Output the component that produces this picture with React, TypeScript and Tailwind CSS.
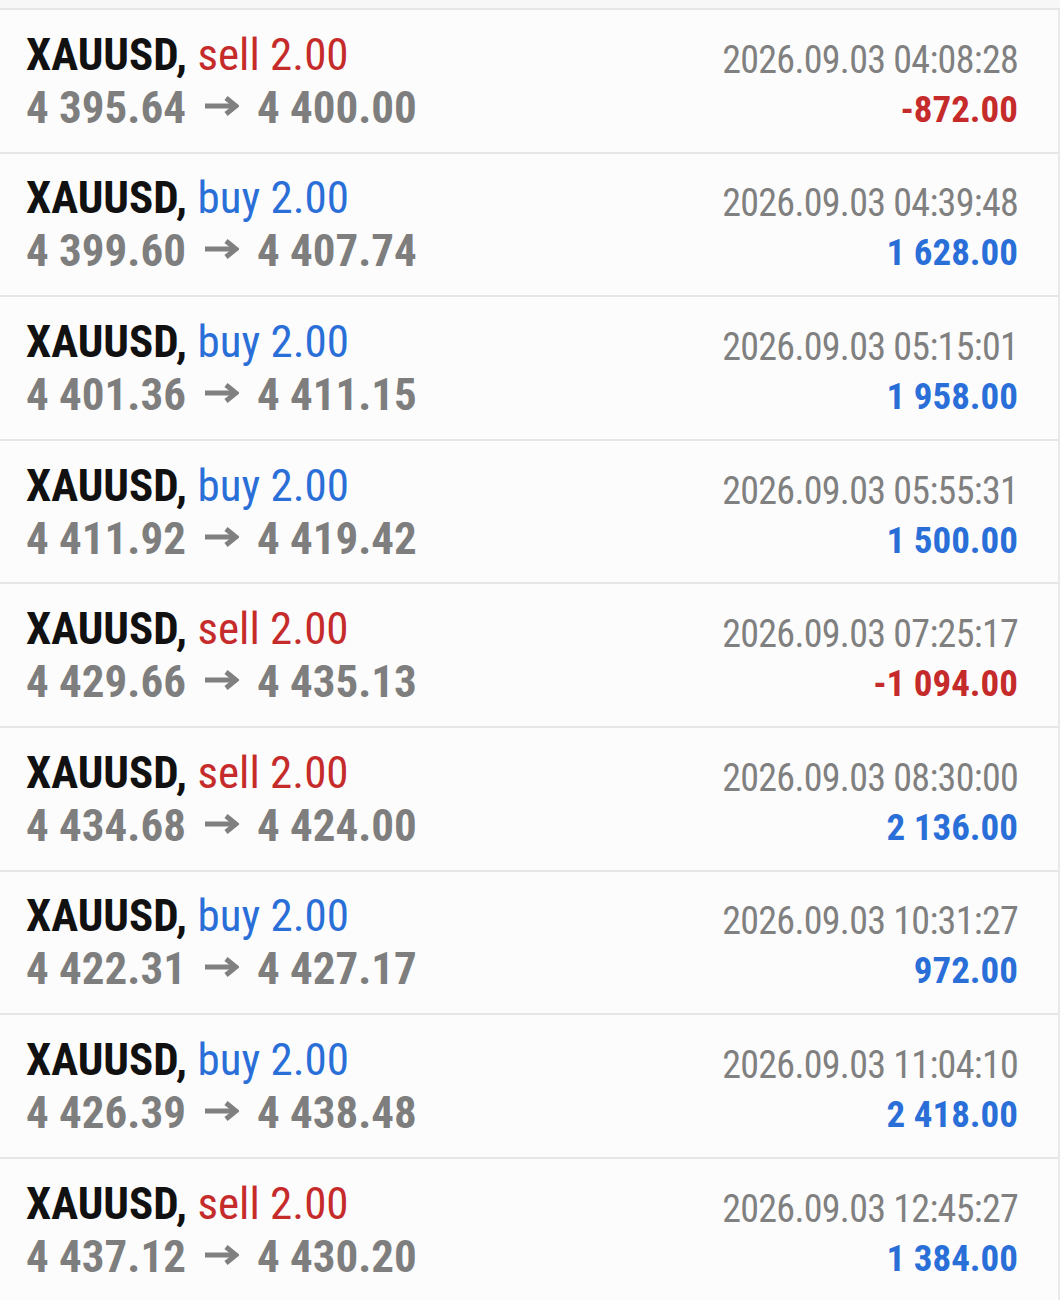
import React from "react";

type Deal = {
  side: "buy" | "sell";
  open: string;
  close: string;
  time: string;
  profit: string;
};

const deals: Deal[] = [
  { side: "sell", open: "4 395.64", close: "4 400.00", time: "2026.09.03 04:08:28", profit: "-872.00" },
  { side: "buy", open: "4 399.60", close: "4 407.74", time: "2026.09.03 04:39:48", profit: "1 628.00" },
  { side: "buy", open: "4 401.36", close: "4 411.15", time: "2026.09.03 05:15:01", profit: "1 958.00" },
  { side: "buy", open: "4 411.92", close: "4 419.42", time: "2026.09.03 05:55:31", profit: "1 500.00" },
  { side: "sell", open: "4 429.66", close: "4 435.13", time: "2026.09.03 07:25:17", profit: "-1 094.00" },
  { side: "sell", open: "4 434.68", close: "4 424.00", time: "2026.09.03 08:30:00", profit: "2 136.00" },
  { side: "buy", open: "4 422.31", close: "4 427.17", time: "2026.09.03 10:31:27", profit: "972.00" },
  { side: "buy", open: "4 426.39", close: "4 438.48", time: "2026.09.03 11:04:10", profit: "2 418.00" },
  { side: "sell", open: "4 437.12", close: "4 430.20", time: "2026.09.03 12:45:27", profit: "1 384.00" },
];

// price arrow, drawn because the font's → is too thin and small
const Arrow = () => (
  <svg
    className="mx-[18px] inline-block h-[20px] w-[35px] align-[7px]"
    viewBox="0 0 35 20"
    fill="none"
    stroke="#808080"
    strokeWidth={5}
  >
    <path d="M1 10H31" />
    <path d="M22 2L32 10L22 18" strokeLinejoin="miter" />
  </svg>
);

const DealRow = ({ deal }: { deal: Deal }) => {
  const loss = deal.profit.startsWith("-");
  return (
    <div className="flex h-[143.6px] items-center justify-between border-b-2 border-[#e6e6e6] pl-[26px] pr-[40px]">
      <div className="flex flex-col text-[45px] leading-[53px]">
        <div>
          <span className="font-bold text-[#111111]">XAUUSD,</span>{" "}
          <span className={deal.side === "sell" ? "text-[#c62b2b]" : "text-[#2a6fd8]"}>
            {deal.side} 2.00
          </span>
        </div>
        <div className="whitespace-nowrap font-bold text-[#7e7e7e]">
          {deal.open}
          <Arrow />
          {deal.close}
        </div>
      </div>
      <div className="flex flex-col items-end pt-[8px] leading-[50px]">
        <div className="text-[38px] tracking-[-0.7px] text-[#808080]">{deal.time}</div>
        <div className={`text-[37px] font-bold ${loss ? "text-[#c62b2b]" : "text-[#2a6fd8]"}`}>
          {deal.profit}
        </div>
      </div>
    </div>
  );
};

export default function App() {
  return (
    <div
      className="min-h-[1300px] w-[1060px] bg-[#fcfcfc] font-stretch-condensed"
      style={{ fontFamily: '"Roboto Condensed", Roboto, sans-serif' }}
    >
      <div className="h-[10px] border-b-2 border-[#e6e6e6] bg-[#f7f7f7]" />
      <div className="border-r-2 border-[#e9e9e9]">
        {deals.map((d, i) => (
          <DealRow key={i} deal={d} />
        ))}
      </div>
    </div>
  );
}
